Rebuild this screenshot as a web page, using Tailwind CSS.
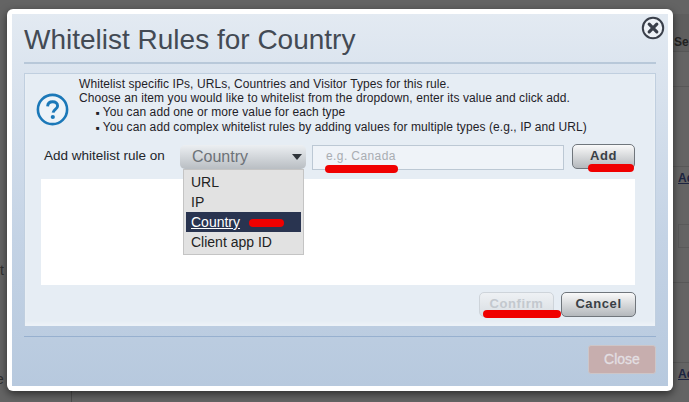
<!DOCTYPE html>
<html lang="en">
<head>
<meta charset="UTF-8" />
<title>Whitelist Rules for Country</title>
<script src="https://cdn.jsdelivr.net/npm/@tailwindcss/browser@4"></script>
</head>
<body class="relative w-[689px] h-[402px] overflow-hidden bg-[#646464] font-['Liberation_Sans',Arial,sans-serif]">

    <!-- Page behind the overlay -->
    <div class="absolute inset-y-0 right-0 w-[16px] text-[12px] text-[#1c2440] overflow-hidden">
        <div class="absolute top-[14px] w-full h-[38px] bg-[#5e5e5e] border-b border-[#565656]"></div>
        <span class="absolute top-[33px] left-[1px] font-bold text-[#222]">Se</span>
        <div class="absolute top-[86px] w-full border-t border-[#585858]"></div>
        <div class="absolute top-[166px] w-full border-t border-[#585858]"></div>
        <span class="absolute top-[169px] left-[5px] font-bold underline">Ad</span>
        <div class="absolute top-[224px] left-[5px] w-[20px] h-[24px] border border-[#5a5a5a]"></div>
        <div class="absolute top-[282px] w-full border-t border-[#585858]"></div>
        <div class="absolute top-[362px] w-full border-t border-[#585858]"></div>
        <span class="absolute top-[365px] left-[5px] font-bold underline">Ad</span>
    </div>
    <span class="absolute left-0 top-[262px] text-[14px] leading-4 text-[#2f2f2f]">t</span>
    <span class="absolute -left-[4px] top-[371px] text-[14px] leading-4 text-[#2f2f2f]">e</span>
    <div class="absolute left-[71px] top-[391px] h-[11px] border-l border-[#4d4d4d]"></div>

    <!-- Modal -->
    <div class="absolute left-[7px] top-[9px] w-[666px] h-[382px] p-[5px] bg-white rounded-[6px] shadow-[0_3px_8px_rgba(0,0,0,0.55)]">
        <div class="relative flex flex-col h-full px-[12px] bg-gradient-to-b from-[#e3eaf2] via-[#c4d3e5] via-60% to-[#b7c9de]">

            <svg class="absolute right-[3px] top-[2px] w-[24px] h-[24px]" viewBox="0 0 24 24" fill="none">
                <circle cx="12" cy="12" r="10.2" stroke="#3a3f4a" stroke-width="2" fill="#eef2f7" />
                <path d="M8.2 8.2L15.8 15.8M15.8 8.2L8.2 15.8" stroke="#3a3f4a" stroke-width="3.2" stroke-linecap="round" />
            </svg>

            <h1 class="h-[50px] pt-[8px] text-[28px] leading-[36px] font-normal text-[#434a54] border-b-2 border-[#b8c8d9]">Whitelist Rules for Country</h1>

            <!-- Panel -->
            <div class="mt-[9px] h-[253px] flex flex-col border border-[#c0cfdf] border-b-0 bg-[#e6edf4] shadow-[inset_0_-3px_3px_#edf2f7]">
                <div class="flex h-[71px] pt-[3px]">
                    <div class="w-[54px] flex justify-center pt-[16px] pl-[1px]">
                        <svg class="w-[33px] h-[33px]" viewBox="0 0 33 33" fill="none">
                            <circle cx="16.5" cy="16.5" r="14.6" stroke="#1b78b8" stroke-width="2.6" fill="#edf3f8" />
                            <path d="M11.6 13.4C11.8 10.4 13.8 8.8 16.7 8.8C19.6 8.8 21.6 10.5 21.6 12.9C21.6 16.2 17.4 16.4 17.1 19.6" stroke="#1b78b8" stroke-width="2.9" />
                            <circle cx="16.8" cy="24" r="2.1" fill="#1b78b8" />
                        </svg>
                    </div>
                    <div class="text-[12px] leading-[14px] text-[#1f2228] tracking-[0.08px]">
                        <p>Whitelist specific IPs, URLs, Countries and Visitor Types for this rule.</p>
                        <p>Choose an item you would like to whitelist from the dropdown, enter its value and click add.</p>
                        <p class="pl-[17px]"><span class="text-[6px] align-[1px] mr-[3px]">■</span>You can add one or more value for each type</p>
                        <p class="pl-[17px]"><span class="text-[6px] align-[1px] mr-[3px]">■</span>You can add complex whitelist rules by adding values for multiple types (e.g., IP and URL)</p>
                    </div>
                </div>

                <div class="flex items-start h-[34px] pl-[19px]">
                    <span class="w-[136px] pt-[2px] text-[13.5px] leading-[18px] text-[#23262b]">Add whitelist rule on</span>
                    <div class="flex items-center justify-between w-[126px] h-[24px] pl-[12px] pr-[4px] rounded-[5px] bg-gradient-to-b from-[#eceff2] to-[#b9bec3] text-[16px] text-[#6d7278]">
                        Country
                        <span class="w-0 h-0 border-x-[5px] border-x-transparent border-t-[6px] border-t-[#2f343a]"></span>
                    </div>
                    <div class="ml-[6px] flex items-center w-[252px] h-[25px] pl-[13px] pb-[3px] border border-[#bcc8d4] bg-[#eff3f8] text-[12px] tracking-[0.4px] text-[#a9adb2]">e.g. Canada</div>
                    <button class="ml-[8px] -mt-[1px] w-[63px] h-[25px] pb-[1px] rounded-[5px] border border-[#70767c] bg-gradient-to-b from-[#fafafa] to-[#b4b8bc] text-[13px] font-bold tracking-[0.6px] text-[#3a3f46]">Add</button>
                </div>

                <div class="relative ml-[16px] mr-[20px] h-[106px] bg-white">
                    <!-- Open dropdown -->
                    <ul class="absolute left-[142px] -top-[10px] w-[121px] h-[86px] p-[2px] bg-[#e2e2e2] border border-[#c4c4c4] text-[14px] leading-[20px] text-[#222]">
                        <li class="pl-[5px]">URL</li>
                        <li class="pl-[5px]">IP</li>
                        <li class="pl-[5px] bg-[#293450] text-white"><span class="underline">Country</span></li>
                        <li class="pl-[5px]">Client app ID</li>
                    </ul>
                    <div class="absolute left-[208px] top-[40px] w-[35px] h-[8px] rounded-full bg-[#f00000]"></div>
                </div>

                <div class="flex justify-end gap-[7px] pt-[7px] pr-[19px]">
                    <button class="w-[75px] h-[25px] pb-[1px] rounded-[5px] border border-[#ced4da] bg-gradient-to-b from-[#eef1f4] to-[#d9dee3] text-[13px] font-bold tracking-[0.6px] text-[#c3c8ce]">Confirm</button>
                    <button class="w-[75px] h-[25px] pb-[1px] rounded-[5px] border border-[#70767c] bg-gradient-to-b from-[#fafafa] to-[#b4b8bc] text-[13px] font-bold tracking-[0.6px] text-[#3a3f46]">Cancel</button>
                </div>
            </div>

            <div class="mt-[10px] border-t border-[#97b0cf]"></div>
            <div class="flex justify-end mt-[8px]">
                <button class="w-[68px] h-[29px] rounded-[3px] border border-[#cdc6c8] bg-[#c7aeae] text-[14px] text-[#e3dfe2] [-webkit-text-stroke:0.3px_#e3dfe2]">Close</button>
            </div>

        </div>
    </div>

    <!-- Red marker strokes drawn on top of the screenshot -->
    <div class="absolute left-[325px] top-[165px] w-[73px] h-[8px] rounded-full bg-[#f00000]"></div>
    <div class="absolute left-[588px] top-[164px] w-[46px] h-[8px] rounded-full bg-[#f00000]"></div>
    <div class="absolute left-[483px] top-[310px] w-[78px] h-[8px] rounded-full bg-[#f00000]"></div>

</body>
</html>
